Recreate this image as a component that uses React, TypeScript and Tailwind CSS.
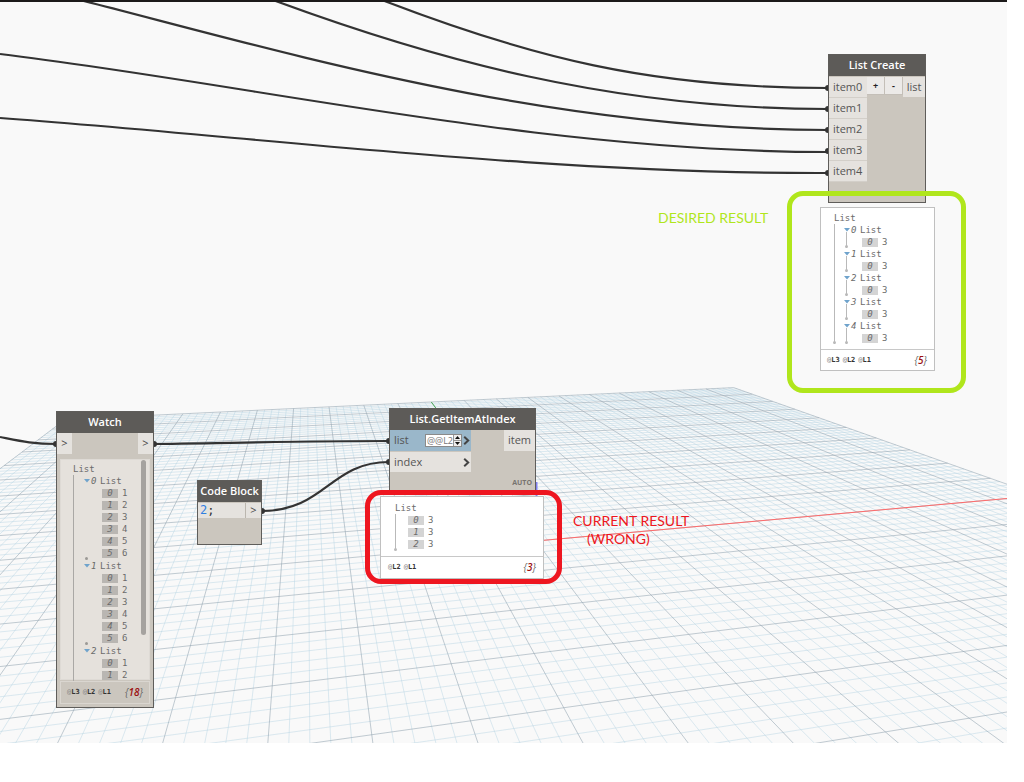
import type { ReactNode } from "react";

type Point = [number, number];

// Ground plane projection: grid units (u along the X axis, v along the Y axis) to canvas pixels.
function project(u: number, v: number): Point {
  const a = u * 0.01752;
  const b = v * 0.08411;
  const d = 1 + a + b;
  return [(536 + a * 3912 + b * 306.8) / d, (541 + a * 236.7 + b * 236.7) / d];
}

function segment(from: Point, to: Point): string {
  const [x1, y1] = project(from[0], from[1]);
  const [x2, y2] = project(to[0], to[1]);
  return `M${x1.toFixed(1)} ${y1.toFixed(1)}L${x2.toFixed(1)} ${y2.toFixed(1)}`;
}

const EXTENT = 10;
const NEAR = -8;

function gridLines(major: boolean): string {
  const parts: string[] = [];
  for (let i = -50; i <= 50; i++) {
    if ((i % 5 === 0) !== major) continue;
    const k = i / 5;
    parts.push(segment([k, NEAR], [k, EXTENT]));
    if (k >= NEAR) parts.push(segment([-EXTENT, k], [EXTENT, k]));
  }
  return parts.join("");
}

const WIRES = [
  "M382 0C530 57 650 88 828 88",
  "M273 0C430 58 610 109 828 109",
  "M80 0C270 48 540 130 828 130",
  "M0 54C250 84 540 152 828 152",
  "M0 118C250 136 540 174 828 173",
  "M0 437C20 441 32 444 57 444",
  "M154 444C240 443 310 441 389 441",
  "M262 511C325 511 330 462 389 462",
];

const PORT_DOTS: Point[] = [
  [828, 88], [828, 109], [828, 130], [828, 151], [828, 173],
  [56, 444], [154, 444], [262, 511], [389, 441], [389, 462],
];

function Backdrop() {
  return (
    <svg className="absolute inset-0 size-full" aria-hidden="true">
      <path d={gridLines(false)} stroke="#b4d2e2" strokeOpacity="0.45" strokeWidth="1" fill="none" />
      <path d={gridLines(true)} stroke="#8fa2ae" strokeOpacity="0.55" strokeWidth="1" fill="none" />
      <path d={segment([0, 0], [EXTENT, 0])} stroke="#ff6a6a" strokeWidth="1" fill="none" />
      <path d={segment([0, 9.2], [0, EXTENT])} stroke="#4fae5a" strokeWidth="1" fill="none" />
      <path d="M536.5 541V482" stroke="#8080f0" strokeWidth="2" />
      {WIRES.map((d) => (
        <path key={d} d={d} stroke="#333333" strokeWidth="2.2" fill="none" />
      ))}
      {PORT_DOTS.map(([x, y]) => (
        <circle key={`${x}-${y}`} cx={x} cy={y} r="3" fill="#333333" />
      ))}
    </svg>
  );
}

function Node({ title, className, children }: { title: string; className: string; children: ReactNode }) {
  return (
    <section className={`absolute flex flex-col border border-[#5f5d5a] bg-[#cbc6be] ${className}`}>
      <h2 className="flex h-[21px] shrink-0 items-center justify-center bg-[#5d5b58] text-[11px] font-semibold whitespace-nowrap text-white">
        {title}
      </h2>
      {children}
    </section>
  );
}

function Toggle() {
  return (
    <button aria-label="Collapse" className="flex w-[7px] items-center">
      <svg width="6" height="4" viewBox="0 0 6 4">
        <path d="M0 0H6L3 3.6Z" fill="#6fa3cc" />
      </svg>
    </button>
  );
}

function Leaf({ index, value, dark }: { index: number; value: number; dark?: boolean }) {
  return (
    <li className="flex h-3 items-center gap-1">
      <span className={`flex h-[9px] w-4 items-center justify-center italic ${dark ? "bg-[#b9b6b2]" : "bg-[#d4d4d4]"}`}>
        {index}
      </span>
      <span>{value}</span>
    </li>
  );
}

function Group({ index, values, dark, open }: { index: number; values: number[]; dark?: boolean; open?: boolean }) {
  return (
    <li className={dark ? "relative pb-px" : "relative"}>
      <div className="flex h-3 items-center">
        <Toggle />
        <span className="w-[9px] italic">{index}</span>
        <span>List</span>
      </div>
      {!dark && <span className="absolute top-2 bottom-0 left-[2px] w-px bg-[#b9b9b9]" />}
      {!open && (
        <span className={`absolute bottom-0 left-px size-[3px] rounded-full ${dark ? "bg-[#9b9996]" : "bg-[#b9b9b9]"}`} />
      )}
      <ul className="pl-[18px]">
        {values.map((value, i) => (
          <Leaf key={i} index={i} value={value} dark={dark} />
        ))}
      </ul>
    </li>
  );
}

function Levels({ levels, count }: { levels: string[]; count: number }) {
  return (
    <>
      <span className="flex gap-[3px] font-['DejaVu_Sans_Mono',monospace] text-[7px] text-[#333]">
        {levels.map((level) => (
          <span key={level}>
            <span className="text-[#888]">@</span>
            <b>{level}</b>
          </span>
        ))}
      </span>
      <span className="text-[10px] text-[#666] italic">
        {"{"}
        <span className="font-semibold text-[#9c1010]">{count}</span>
        {"}"}
      </span>
    </>
  );
}

const MONO = "font-['DejaVu_Sans_Mono',monospace] text-[9px] leading-3 text-[#6b6b6b]";

function ListCreateNode() {
  return (
    <Node title="List Create" className="top-[54px] left-[828px] h-[149px] w-[98px]">
      <div className="flex items-start pt-px">
        <ul className="flex w-[38px] flex-col">
          {["item0", "item1", "item2", "item3", "item4"].map((name) => (
            <li key={name} className="flex h-[21px] items-center border-b border-[#d3cfc9] bg-[#e5e2de] pl-1 text-[11px] text-[#555]">
              {name}
            </li>
          ))}
        </ul>
        <button className="flex h-[18px] w-[18px] items-center justify-center border-r border-b border-[#c4bfb8] bg-[#eceae8] text-[9px] font-bold text-[#222]">+</button>
        <button className="flex h-[18px] w-[18px] items-center justify-center border-r border-b border-[#c4bfb8] bg-[#eceae8] text-[9px] font-bold text-[#222]">-</button>
        <span className="flex h-5 flex-1 items-center justify-center bg-[#e5e2de] text-[11px] text-[#555]">list</span>
      </div>
    </Node>
  );
}

function ListCreatePreview() {
  return (
    <section className="absolute top-[207px] left-[820px] flex w-[115px] flex-col border border-[#c0c0c0] bg-white">
      <div className={`h-[141px] pt-1 pl-[13px] ${MONO}`}>
        <div>List</div>
        <div className="relative pl-[10px]">
          <span className="absolute top-0 bottom-0 left-0 w-px bg-[#b9b9b9]" />
          <span className="absolute bottom-0 -left-px size-[3px] rounded-full bg-[#b9b9b9]" />
          <ul>
            {[0, 1, 2, 3, 4].map((i) => (
              <Group key={i} index={i} values={[3]} />
            ))}
          </ul>
        </div>
      </div>
      <footer className="flex h-[21px] items-center justify-between border-t border-[#c8c8c8] pr-[7px] pl-[6px]">
        <Levels levels={["L3", "L2", "L1"]} count={5} />
      </footer>
    </section>
  );
}

function WatchNode() {
  return (
    <Node title="Watch" className="top-[411px] left-[56px] h-[297px] w-[98px]">
      <div className="flex h-[21px] shrink-0 justify-between text-[11px] text-[#444]">
        <span className="flex w-[15px] items-center justify-center bg-[#e5e2de]">&gt;</span>
        <span className="flex w-[15px] items-center justify-center bg-[#e5e2de]">&gt;</span>
      </div>
      <div className="mx-[3px] mt-[5px] flex h-[221px] shrink-0 border border-[#dedad5] bg-[#e5e1dc]">
        <div className={`flex flex-1 flex-col pt-[3px] pl-3 ${MONO}`}>
          <div>List</div>
          <ul className="flex-1 border-l border-[#aaa8a5] pl-[10px]">
            <Group index={0} values={[1, 2, 3, 4, 5, 6]} dark />
            <Group index={1} values={[1, 2, 3, 4, 5, 6]} dark />
            <Group index={2} values={[1, 2]} dark open />
          </ul>
        </div>
        <span className="mr-[3px] h-[175px] w-[5px] rounded-full bg-[#a5a29f]" />
      </div>
      <footer className="mx-[3px] mt-px flex h-[23px] shrink-0 items-center justify-between border border-[#dad6d0] pr-[6px] pl-[6px]">
        <Levels levels={["L3", "L2", "L1"]} count={18} />
      </footer>
    </Node>
  );
}

function CodeBlockNode() {
  return (
    <Node title="Code Block" className="top-[480px] left-[197px] h-[65px] w-[65px]">
      <div className="mt-px flex h-[15px] items-center bg-[#e5e2de]">
        <code className="flex-1 pl-[2px] font-['DejaVu_Sans_Mono',monospace] text-xs leading-[15px] text-[#333]">
          <span className="text-[#2f80e0]">2</span>;
        </code>
        <span className="flex h-full w-4 items-center justify-center border-l border-[#bbb6ae] text-[11px] text-[#444]">&gt;</span>
      </div>
    </Node>
  );
}

function Chevron() {
  return (
    <button aria-label="Use levels" className="flex w-[9px] items-center justify-center">
      <svg width="7" height="9" viewBox="0 0 7 9">
        <path d="M1.2 0.8L5.2 4.5L1.2 8.2" stroke="#444444" strokeWidth="2" fill="none" />
      </svg>
    </button>
  );
}

function GetItemNode() {
  return (
    <Node title="List.GetItemAtIndex" className="top-[408px] left-[389px] h-[86px] w-[147px]">
      <div className="flex items-start justify-between text-[11px] text-[#555]">
        <div className="flex w-[81px] flex-col gap-px">
          <div className="flex h-[21px] items-center bg-[#9ab7ca] pl-1">
            <label htmlFor="level" className="flex-1">list</label>
            <span className="flex h-[13px] w-[37px] items-center border border-[#8a8a8a] bg-white">
              <input
                id="level"
                defaultValue="@@L2"
                className="h-[11px] w-[27px] min-w-0 bg-transparent pl-px text-[9px] text-[#777] outline-none"
              />
              <span className="flex h-full flex-1 flex-col border-l border-[#999] bg-[#eee]">
                <button aria-label="Up" className="flex flex-1 items-center justify-center border-b border-[#999]">
                  <svg width="5" height="3" viewBox="0 0 5 3"><path d="M0 3H5L2.5 0Z" fill="#111111" /></svg>
                </button>
                <button aria-label="Down" className="flex flex-1 items-center justify-center">
                  <svg width="5" height="3" viewBox="0 0 5 3"><path d="M0 0H5L2.5 3Z" fill="#111111" /></svg>
                </button>
              </span>
            </span>
            <Chevron />
          </div>
          <div className="flex h-5 items-center justify-between bg-[#e5e2de] pl-1">
            <span>index</span>
            <Chevron />
          </div>
        </div>
        <span className="flex h-[21px] w-[31px] items-center justify-center bg-[#e5e2de]">item</span>
      </div>
      <div className="flex justify-end pt-[6px] pr-[3px] text-[7px] leading-[10px] font-bold text-[#77736f]">AUTO</div>
    </Node>
  );
}

function GetItemPreview() {
  return (
    <section className="absolute top-[496px] left-[380px] flex w-[164px] flex-col border border-[#c0c0c0] bg-white">
      <div className={`h-[59px] pt-[5px] pl-[14px] ${MONO}`}>
        <div>List</div>
        <div className="relative pl-[13px]">
          <span className="absolute top-0 bottom-0 left-0 w-px bg-[#b9b9b9]" />
          <span className="absolute -bottom-px -left-px size-[3px] rounded-full bg-[#b9b9b9]" />
          <ul>
            {[0, 1, 2].map((i) => (
              <Leaf key={i} index={i} value={3} />
            ))}
          </ul>
        </div>
      </div>
      <footer className="flex h-[22px] items-center justify-between border-t border-[#c8c8c8] pr-[7px] pl-[7px]">
        <Levels levels={["L2", "L1"]} count={3} />
      </footer>
    </section>
  );
}

export default function App() {
  return (
    <div className="flex min-h-screen bg-white pr-[17px] pb-[39px] font-['Open_Sans',sans-serif]">
      <main className="relative flex-1 overflow-hidden border-t-2 border-[#1c1a1a] bg-[#f9f9f9]">
        <div className="absolute inset-x-0 -top-[2px] bottom-0">
          <Backdrop />
          <ListCreateNode />
          <ListCreatePreview />
          <WatchNode />
          <CodeBlockNode />
          <GetItemNode />
          <GetItemPreview />
          <div className="absolute top-[191px] left-[787px] h-[202px] w-[179px] rounded-2xl border-[5px] border-[#b0e61c]" />
          <div className="absolute top-[490px] left-[365px] h-[94px] w-[197px] rounded-2xl border-[5px] border-[#ee1620]" />
          <p className="absolute top-[209px] left-[658px] font-['Lato',sans-serif] text-sm leading-[18px] whitespace-nowrap text-[#b0e61c]">
            DESIRED RESULT
          </p>
          <p className="absolute top-[512px] left-[573px] font-['Lato',sans-serif] text-sm leading-[18px] whitespace-nowrap text-[#ee1620]">
            CURRENT RESULT
            <span className="block pl-[14px]">(WRONG)</span>
          </p>
        </div>
      </main>
    </div>
  );
}
